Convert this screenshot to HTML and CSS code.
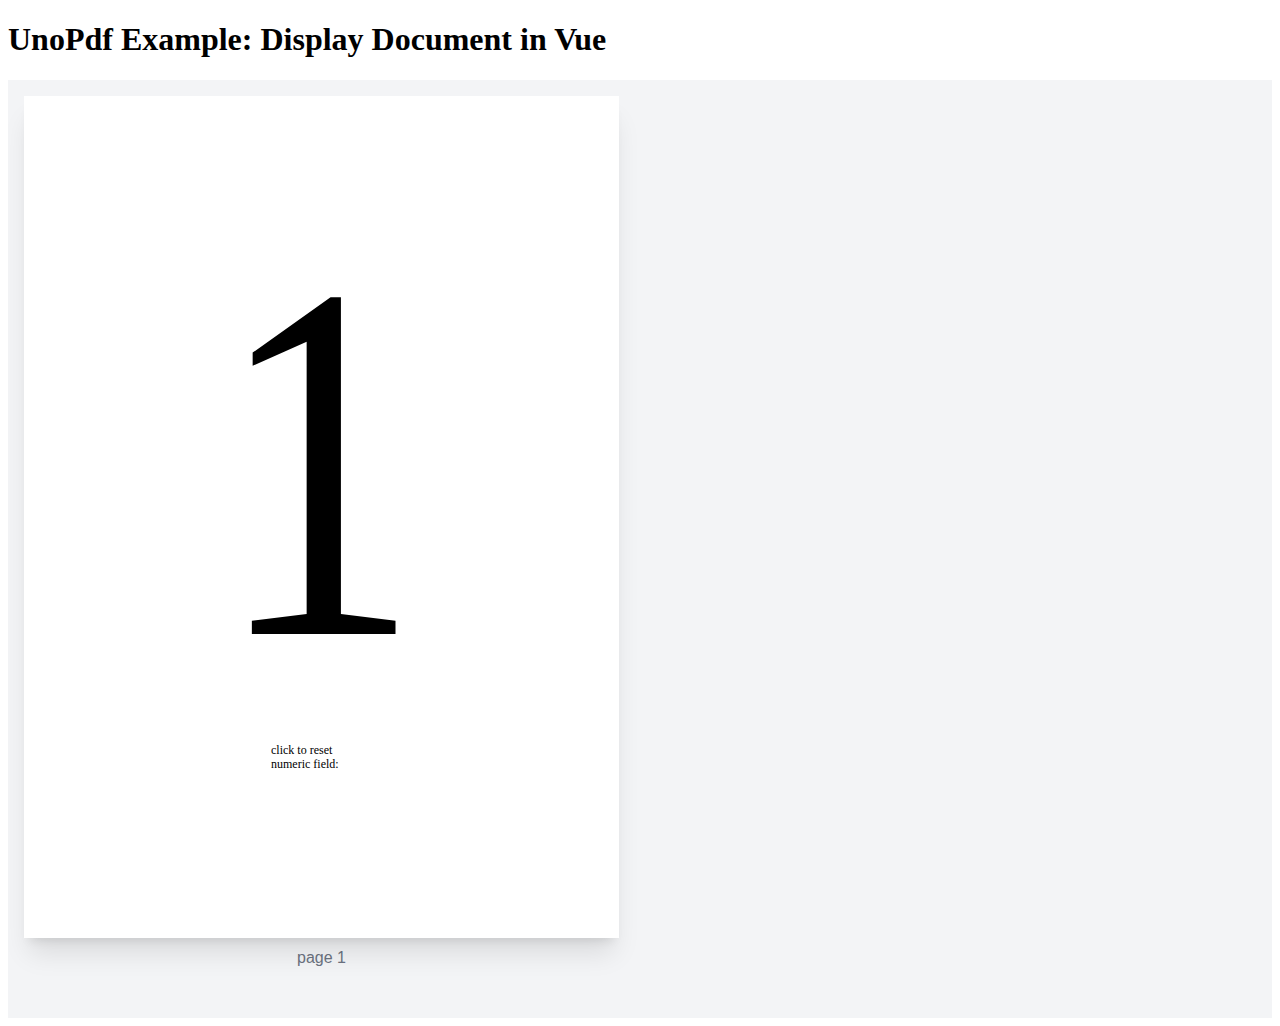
FILE: index.html
```html
<!DOCTYPE html>
<html lang="en">
<head>
    <meta charset="UTF-8">
    <title>UnoPdf Example: Display Document in Vue</title>
    <link rel="stylesheet" href="styles.css">
</head>
<body>
    <h1>UnoPdf Example: Display Document in Vue</h1>
    <div class="viewer">
        <div class="page-wrap">
            <div class="page">
                <span class="page-number">1</span>
                <span class="field-label">click to reset<br>numeric field:</span>
            </div>
            <div class="page-caption">page 1</div>
        </div>
    </div>
</body>
</html>
```

FILE: styles.css
```css
body {
    margin: 0 8px 8px;
    font-family: "Liberation Serif", serif;
}

.viewer {
    padding: 16px;
    background-color: #f3f4f6;
}

.page-wrap {
    width: 595px;
    margin-bottom: 32px;
}

.page {
    position: relative;
    height: 842px;
    background-color: #fff;
    box-shadow: 0 20px 25px -5px rgba(0,0,0,0.1), 0 8px 10px -6px rgba(0,0,0,0.1);
    overflow: hidden;
}

/* text placed on the pdf page */
.page-number {
    position: absolute;
    left: 192px;
    top: 79px;
    font-size: 510px;
    line-height: 575px;
    color: #000;
    transform: scaleX(0.8);
    transform-origin: left;
}

.field-label {
    position: absolute;
    left: 247px;
    top: 647px;
    font-size: 12px;
    line-height: 14px;
    color: #000;
}

.page-caption {
    margin-top: 8px;
    font-family: "Liberation Sans", Arial, sans-serif;
    font-size: 16px;
    line-height: 24px;
    text-align: center;
    color: #6b7280;
}
```
